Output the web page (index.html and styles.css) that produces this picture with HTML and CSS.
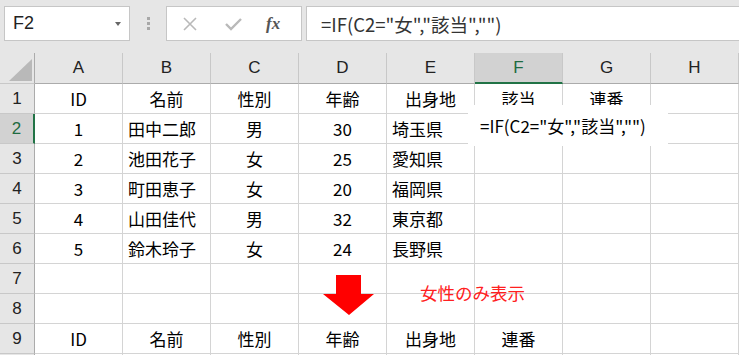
FILE: index.html
```html
<!DOCTYPE html>
<html>
	<head>
		<meta charset="utf-8">
		<title>IF関数</title>
		<link rel="stylesheet" href="styles.css">
	</head>
	<body>
	<!--数式バー-->
	<div class="bar">
		<div class="namebox">
			<span>F2</span>
			<svg class="caret" width="6" height="4" viewBox="0 0 6 4"><path d="M0 0H6L3 4Z" fill="#666"/></svg>
		</div>
		<div class="grip"><i></i><i></i><i></i></div>
		<div class="btns">
			<svg width="14" height="14" viewBox="0 0 14 14"><path d="M1 1L13 13M13 1L1 13" stroke="#b9b9b9" stroke-width="1.6" fill="none"/></svg>
			<svg width="17" height="14" viewBox="0 0 17 14"><path d="M1 7L6 12L16 2" stroke="#b9b9b9" stroke-width="2.4" fill="none"/></svg>
			<span class="fx">fx</span>
		</div>
		<div class="formula">=IF(C2="女","該当","")</div>
	</div>
	<!--シート-->
	<div class="sheet">
		<div class="row head">
			<div class="cell rh"><svg class="corner" width="23" height="22" viewBox="0 0 23 22"><path d="M23 0V22H0Z" fill="#b9b9b9"/></svg></div>
			<div class="cell">A</div><div class="cell">B</div><div class="cell">C</div><div class="cell">D</div>
			<div class="cell">E</div><div class="cell sel">F</div><div class="cell">G</div><div class="cell">H</div><div class="cell"></div>
		</div>
		<div class="row">
			<div class="cell rh">1</div>
			<div class="cell">ID</div><div class="cell">名前</div><div class="cell">性別</div><div class="cell">年齢</div>
			<div class="cell">出身地</div><div class="cell">該当</div><div class="cell">連番</div><div class="cell"></div><div class="cell"></div>
		</div>
		<div class="row">
			<div class="cell rh sel">2</div>
			<div class="cell">1</div><div class="cell l">田中二郎</div><div class="cell">男</div><div class="cell">30</div>
			<div class="cell l">埼玉県</div><div class="cell"></div><div class="cell"></div><div class="cell"></div><div class="cell"></div>
		</div>
		<div class="row">
			<div class="cell rh">3</div>
			<div class="cell">2</div><div class="cell l">池田花子</div><div class="cell">女</div><div class="cell">25</div>
			<div class="cell l">愛知県</div><div class="cell"></div><div class="cell"></div><div class="cell"></div><div class="cell"></div>
		</div>
		<div class="row">
			<div class="cell rh">4</div>
			<div class="cell">3</div><div class="cell l">町田恵子</div><div class="cell">女</div><div class="cell">20</div>
			<div class="cell l">福岡県</div><div class="cell"></div><div class="cell"></div><div class="cell"></div><div class="cell"></div>
		</div>
		<div class="row">
			<div class="cell rh">5</div>
			<div class="cell">4</div><div class="cell l">山田佳代</div><div class="cell">男</div><div class="cell">32</div>
			<div class="cell l">東京都</div><div class="cell"></div><div class="cell"></div><div class="cell"></div><div class="cell"></div>
		</div>
		<div class="row">
			<div class="cell rh">6</div>
			<div class="cell">5</div><div class="cell l">鈴木玲子</div><div class="cell">女</div><div class="cell">24</div>
			<div class="cell l">長野県</div><div class="cell"></div><div class="cell"></div><div class="cell"></div><div class="cell"></div>
		</div>
		<div class="row">
			<div class="cell rh">7</div>
			<div class="cell"></div><div class="cell"></div><div class="cell"></div><div class="cell"></div>
			<div class="cell"></div><div class="cell"></div><div class="cell"></div><div class="cell"></div><div class="cell"></div>
		</div>
		<div class="row">
			<div class="cell rh">8</div>
			<div class="cell"></div><div class="cell"></div><div class="cell"></div><div class="cell"></div>
			<div class="cell"></div><div class="cell"></div><div class="cell"></div><div class="cell"></div><div class="cell"></div>
		</div>
		<div class="row">
			<div class="cell rh">9</div>
			<div class="cell">ID</div><div class="cell">名前</div><div class="cell">性別</div><div class="cell">年齢</div>
			<div class="cell">出身地</div><div class="cell">連番</div><div class="cell"></div><div class="cell"></div><div class="cell"></div>
		</div>
		<div class="row">
			<div class="cell rh"></div>
			<div class="cell"></div><div class="cell"></div><div class="cell"></div><div class="cell"></div>
			<div class="cell"></div><div class="cell"></div><div class="cell"></div><div class="cell"></div><div class="cell"></div>
		</div>
		<!--注釈-->
		<div class="tip">=IF(C2="女","該当","")</div>
		<svg class="arrow" width="52" height="41" viewBox="0 0 52 41"><path d="M13 0H38V19H51L26 40L0 19H13Z" fill="#ff0000"/></svg>
		<div class="note">女性のみ表示</div>
	</div>
	</body>
</html>
```

FILE: styles.css
```css
*{margin:0;padding:0;box-sizing:border-box;}
body{width:739px;height:355px;overflow:hidden;background:#fff;font-family:"Noto Sans CJK JP","Liberation Sans",sans-serif;color:#000;}
/*数式バー*/
.bar{height:53px;background:#e6e6e6;display:flex;align-items:flex-start;padding-top:6px;}
.namebox{width:126px;height:35px;margin-left:4px;background:#fff;border:1px solid #c6c6c6;display:flex;align-items:center;justify-content:space-between;padding:0 8px 0 8px;font-family:"Liberation Sans",sans-serif;font-size:18px;color:#222;}
.grip{width:4px;margin:11px 15px 0 17px;display:flex;flex-direction:column;gap:2px;}
.grip i{display:block;width:3px;height:3px;background:#a8a8a8;}
.btns{width:136px;height:35px;background:#fff;border:1px solid #c6c6c6;display:flex;align-items:center;padding-left:16px;gap:28px;}
.fx{font-family:"Liberation Serif",serif;font-style:italic;font-weight:bold;font-size:17px;color:#555;margin-left:-4px;}
.formula{flex:1;height:35px;margin-left:4px;background:#fff;border:1px solid #c6c6c6;border-right:none;padding-left:14px;display:flex;align-items:center;font-size:18.5px;color:#333;}
/*シート*/
.sheet{position:relative;}
.row{display:grid;grid-template-columns:35px repeat(8,88px) 1fr;height:30px;}
.cell{border-right:1px solid #d4d4d4;border-bottom:1px solid #d4d4d4;display:flex;align-items:center;justify-content:center;font-size:17px;white-space:nowrap;overflow:hidden;}
.cell.l{justify-content:flex-start;padding-left:5px;}
.head{height:31px;}
.head .cell{background:#e6e6e6;border-right-color:#c8c8c8;border-bottom-color:#ababab;font-family:"Liberation Sans",sans-serif;color:#222;}
.head .cell.sel{background:#d2d2d2;color:#1e6b41;border-bottom:2px solid #217346;}
.rh{background:#e6e6e6;border-right-color:#ababab !important;border-bottom-color:#c8c8c8 !important;font-family:"Liberation Sans",sans-serif;color:#222;}
.rh.sel{background:#d2d2d2;color:#1e6b41;border-right:2px solid #217346 !important;}
.corner{align-self:flex-end;margin:0 2px 2px auto;}
.tip{position:absolute;left:468px;top:52px;width:200px;height:41px;background:#fff;padding-left:12px;display:flex;align-items:center;font-size:17px;}
.arrow{position:absolute;left:323px;top:222px;}
.note{position:absolute;left:420px;top:227px;font-size:17.5px;color:#ff2020;}
```
